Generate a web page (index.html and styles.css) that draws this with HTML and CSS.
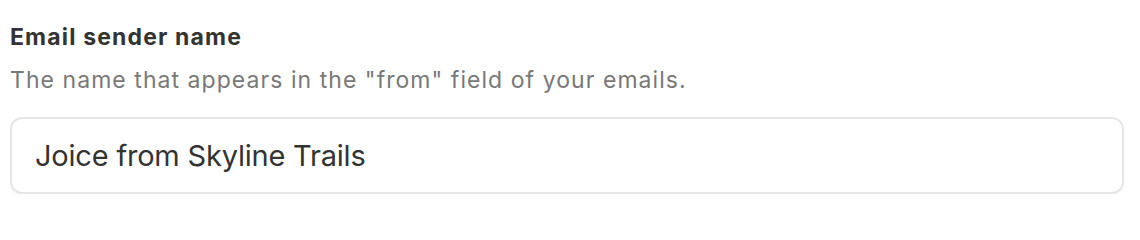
FILE: index.html
```html
<!DOCTYPE html>
<html>
<head>
<meta charset="utf-8">
<link rel="stylesheet" href="styles.css">
</head>
<body>
<div class="field">
  <label class="label" for="sender">Email sender name</label>
  <p class="hint">The name that appears in the "from" field of your emails.</p>
  <input class="input" id="sender" type="text" value="Joice from Skyline Trails">
</div>
</body>
</html>
```
FILE: styles.css
```css
html, body {
  margin: 0;
  padding: 0;
  background: #ffffff;
}
body {
  font-family: "Inter", "Noto Sans", sans-serif;
}
.field {
  display: flex;
  flex-direction: column;
  padding: 23px 16px 0 10px;
}
.label {
  font-size: 23px;
  font-weight: 700;
  color: #333333;
  line-height: 28px;
  letter-spacing: 1.15px;
}
.hint {
  margin: 15px 0 0 0;
  font-size: 23px;
  color: #787878;
  line-height: 28px;
  letter-spacing: 1.05px;
}
.input {
  margin-top: 23px;
  box-sizing: border-box;
  height: 77px;
  width: 100%;
  border: 2px solid #e6e6e6;
  border-radius: 12px;
  padding: 0 23px;
  font-family: inherit;
  font-size: 29px;
  letter-spacing: -0.2px;
  color: #333333;
  background: #ffffff;
  box-shadow: 0 1px 1px rgba(0,0,0,0.04);
  outline: none;
}
```
